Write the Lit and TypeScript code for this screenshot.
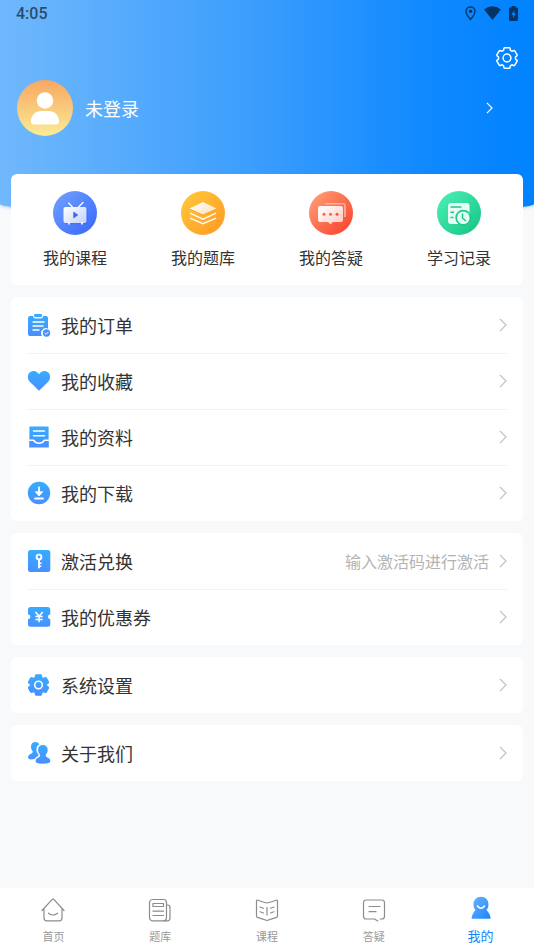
import { LitElement, html, svg, css, nothing, TemplateResult, SVGTemplateResult } from "lit";
import { customElement } from "lit/decorators.js";
import { classMap } from "lit/directives/class-map.js";

interface Row {
  label: string;
  icon: TemplateResult;
  hint?: string;
}

/** Outline of a six-toothed cog centred on (cx, cy). */
function cog(cx: number, cy: number, outer: number, inner: number): string {
  const at = (r: number, deg: number) => {
    const a = (deg * Math.PI) / 180;
    return `${(cx + r * Math.cos(a)).toFixed(2)} ${(cy + r * Math.sin(a)).toFixed(2)}`;
  };
  let d = "";
  for (let i = 0; i < 6; i++) {
    const m = -90 + i * 60;
    d += `${i ? "L" : "M"}${at(inner, m - 22)}Q${at(outer, m - 19)} ${at(outer, m - 13)}L${at(outer, m + 13)}Q${at(outer, m + 19)} ${at(inner, m + 22)}Q${at(inner * 0.94, m + 30)} ${at(inner, m + 38)}`;
  }
  return d + "Z";
}

const rowIcon = (body: SVGTemplateResult) => html`
  <svg width="24" height="24" viewBox="0 0 24 24" aria-hidden="true">
    <defs>
      <linearGradient id="g" x1="0" y1="0" x2="0" y2="24" gradientUnits="userSpaceOnUse">
        <stop offset="0" stop-color="#35aeff" />
        <stop offset="1" stop-color="#4a8dff" />
      </linearGradient>
    </defs>
    ${body}
  </svg>
`;

const disc = (id: string, from: string, to: string, body: SVGTemplateResult) => html`
  <svg width="44" height="44" viewBox="0 0 44 44" aria-hidden="true">
    <defs>
      <linearGradient id=${id} x1="0.1" y1="0.1" x2="0.9" y2="0.9">
        <stop offset="0" stop-color=${from} />
        <stop offset="1" stop-color=${to} />
      </linearGradient>
      <linearGradient id=${id + "-face"} x1="0" y1="0" x2="1" y2="0.8">
        <stop offset="0" stop-color="#fff" />
        <stop offset="1" stop-color="#fff" stop-opacity="0.7" />
      </linearGradient>
    </defs>
    <circle cx="22" cy="22" r="22" fill="url(#${id})" />
    ${body}
  </svg>
`;

const shortcuts = [
  {
    label: "我的课程",
    icon: disc("course", "#6c9dff", "#3c6cfb", svg`
      <path d="M15.500 12l4 4M30 11.500l-4.500 4.500" stroke="#fff" stroke-width="1.200" fill="none" stroke-linecap="round" />
      <rect x="12" y="17.500" width="23" height="16" rx="2" fill="#2f5de8" opacity=".3" />
      <path d="M15 31h2v2.500h-2zM28 31h2v2.500h-2z" fill="#dfeaff" />
      <rect x="10.500" y="16" width="23" height="16" rx="2" fill="url(#course-face)" />
      <path d="M20.300 20.500v7l5-3.500z" fill="#3567f2" />`),
  },
  {
    label: "我的题库",
    icon: disc("bank", "#ffc637", "#ff9d28", svg`
      <path d="M22 12l13.500 6.500L22 24.500 8.500 18.500z" fill="#e8821a" opacity=".3" />
      <path d="M22 11l13.500 6.500L22 23.500 8.500 17.500z" fill="url(#bank-face)" />
      <path d="M9 22.200l13 6 13-6M9 27.200l13 5.500 13-5.500" fill="none" stroke="#fff" stroke-width="1.300" stroke-opacity=".95" />`),
  },
  {
    label: "我的答疑",
    icon: disc("qa", "#ff9a72", "#fb4630", svg`
      <path d="M16 12.800h18.300q1.700 0 1.700 1.700V26" fill="none" stroke="#ffb39e" stroke-width="1.600" />
      <path d="M11 15h21q2 0 2 2v12q0 2-2 2H24l-2.500 2.200L19 31h-8q-2 0-2-2V17q0-2 2-2z" fill="url(#qa-face)" />
      <circle cx="15" cy="23.300" r="1.500" fill="#fb6343" /><circle cx="21.500" cy="23.300" r="1.500" fill="#fb6343" /><circle cx="28" cy="23.300" r="1.500" fill="#fb5237" />`),
  },
  {
    label: "学习记录",
    icon: disc("log", "#47eeb2", "#1bc588", svg`
      <rect x="11" y="12" width="21.500" height="21" rx="3" fill="#e6fff5" />
      <path d="M13.500 16h11M13.500 21.200h3.500M13.500 26.500h3" stroke="#23c58c" stroke-width="1.600" />
      <circle cx="26.300" cy="26.700" r="8" fill="#1fc98d" />
      <circle cx="26.300" cy="26.700" r="6.300" fill="#e0fff3" />
      <path d="M25.500 22.500v4.500l3.300 3" fill="none" stroke="#23c58c" stroke-width="1.500" />`),
  },
];

const groups: Row[][] = [
  [
    {
      label: "我的订单",
      icon: rowIcon(svg`
        <path d="M3 3h3q.5 2.500 2.500 2.500h5Q16 5.500 16.200 3H19q2 0 2 2v10.500a5 5 0 0 0-6 7.500H3q-2 0-2-2V5q0-2 2-2z" fill="url(#g)" />
        <rect x="7" y="1" width="8" height="3" rx="1.200" fill="url(#g)" />
        <path d="M6 9h11M6 13h10M6 17h6" stroke="#fff" stroke-width="1.400" stroke-linecap="round" />
        <circle cx="19.500" cy="20" r="3.700" fill="url(#g)" />
        <path d="M17.700 20l1.400 1.300 2.400-2.500" stroke="#fff" fill="none" />`),
    },
    {
      label: "我的收藏",
      icon: rowIcon(svg`<path d="M12 21.800L2.500 12.400C-.5 8.800.7 2.600 6.300 2.100c2.400-.2 4.400 1.200 5.700 3.200 1.300-2 3.300-3.400 5.700-3.200 5.600.5 6.800 6.700 3.800 10.300z" fill="url(#g)" />`),
    },
    {
      label: "我的资料",
      icon: rowIcon(svg`
        <path d="M3 1.500h18q.6 0 .6.600V14.500h-4.100q-.9 0-1.200.8Q15 17.500 12 17.500t-4.300-2.200q-.3-.8-1.200-.8H2.400V2.100q0-.6.600-.6z" fill="url(#g)" />
        <path d="M2.200 16h4Q8 19 12 19t5.800-3h4v6.400H2.200z" fill="url(#g)" />
        <path d="M6.500 6h11M6.500 10.800h11" stroke="#fff" stroke-width="1.500" stroke-linecap="round" />`),
    },
    {
      label: "我的下载",
      icon: rowIcon(svg`
        <circle cx="12" cy="12" r="11.200" fill="url(#g)" />
        <path d="M12 6.500v6" stroke="#fff" stroke-width="2" stroke-linecap="round" />
        <path d="M8.300 10.800h7.400L12 15z" fill="#fff" stroke="#fff" stroke-width=".8" stroke-linejoin="round" />
        <path d="M8 17.500h8" stroke="#fff" stroke-width="1.800" stroke-linecap="round" />`),
    },
  ],
  [
    {
      label: "激活兑换",
      hint: "输入激活码进行激活",
      icon: rowIcon(svg`
        <rect x="1" y="1" width="22.300" height="22" rx="2.500" fill="url(#g)" />
        <circle cx="12" cy="8" r="2.400" fill="none" stroke="#fff" stroke-width="1.900" />
        <path d="M12 11v7.500" stroke="#fff" stroke-width="1.900" stroke-linecap="round" />
        <path d="M12 14.300h2.500M12 17.300h2.300" stroke="#fff" stroke-width="1.500" />`),
    },
    {
      label: "我的优惠券",
      icon: rowIcon(svg`
        <path d="M3.500 2h17Q23.300 2 23.300 4.500v4.900a2.400 2.400 0 0 0 0 4.800v5.100q0 2.500-2.800 2.500h-17Q1 21.800 1 19.300v-5.100a2.400 2.400 0 0 0 0-4.800V4.500Q1 2 3.500 2z" fill="url(#g)" />
        <path d="M8.500 7l3.600 4.300L15.700 7M12.100 11.300v6M8.500 11.500h7.200M8.500 14.500h7.200" stroke="#fff" stroke-width="1.500" fill="none" />`),
    },
  ],
  [
    {
      label: "系统设置",
      icon: rowIcon(svg`
        <path d=${cog(11.5, 12, 10.5, 8.4)} fill="url(#g)" stroke="url(#g)" stroke-width="1.200" stroke-linejoin="round" />
        <circle cx="11.500" cy="12" r="3.800" fill="none" stroke="#fff" stroke-width="1.600" />`),
    },
  ],
  [
    {
      label: "关于我们",
      icon: rowIcon(svg`
        <path d="M8.500 1c-3 0-4.500 2-4.500 4.800 0 2 .6 3.400 1.700 4.500.3 1-.3 1.800-1.200 2.200C2.500 13.400 1 14.200 1 16.200q0 2 2.500 2.300l4-.4c.8-1.500 2-2.200 3.400-2.900.7-.5.8-1.200.4-1.900-2.800-3-2.500-8 1-10C11.300 1.800 10 1 8.500 1z" fill="url(#g)" />
        <path d="M15.800 4c-3 0-4.700 2-4.700 4.700 0 2.100.7 3.600 1.900 4.800.5 1.300-.1 2.200-1.200 2.700-2 .9-3.200 1.700-3.200 3.700 0 2 2.500 2.800 7.200 2.800s7.500-.8 7.500-2.800c0-2-1.100-2.800-3.300-3.700-1.100-.5-1.600-1.400-1.100-2.700 1.200-1.200 1.800-2.700 1.800-4.800C20.700 6 18.800 4 15.800 4z" fill="url(#g)" />`),
    },
  ],
];

const tabIcon = (body: SVGTemplateResult) => html`
  <svg width="24" height="24" viewBox="0 0 24 24" fill="none" stroke="#8c8c8c"
    stroke-width="1.200" stroke-linecap="round" stroke-linejoin="round" aria-hidden="true">${body}</svg>
`;

const tabs = [
  {
    label: "首页",
    icon: tabIcon(svg`<path d="M1 12.500L11 1.700q1-1 2 0L23 12.500M3 10.500V20q0 2.800 2.800 2.800h12.400Q21 22.800 21 20v-9.500M7.500 15.200q4.500 3.600 9 0" />`),
  },
  {
    label: "题库",
    icon: tabIcon(svg`<rect x="1.500" y="1.500" width="17" height="21.300" rx="3" /><path d="M18.500 7h1q2.500 0 2.500 2.500v10.800q0 2.500-2.500 2.500h-3.500M5 5.500h10.500V8.500H5zM5 13.200h10.500M5 17.500h10.500" />`),
  },
  {
    label: "课程",
    icon: tabIcon(svg`<path d="M12 5Q7 4 3 2.300q-1.500-.5-1.500 1V18q0 1 1 1.400Q7 20.700 12 22.500q5-1.800 9.500-3.100 1-.4 1-1.400V3.300q0-1.500-1.500-1Q17 4 12 5zM12 9.500v7.500M5 9l3.500 1.200M5 13.800l3.500 1.200M19 9l-3.500 1.200M19 13.800l-3.500 1.200" />`),
  },
  {
    label: "答疑",
    icon: tabIcon(svg`<path d="M12.500 21H4.300q-2.800 0-2.800-2.800V4.800Q1.500 2 4.300 2h15.400q2.800 0 2.800 2.800v13.400q0 2.800-2.800 2.800h-1.500M12.500 21l3.300 2M7 8.500h11M7 13.700h7" />`),
  },
  {
    label: "我的",
    active: true,
    icon: html`
      <svg width="24" height="24" viewBox="0 0 24 24" aria-hidden="true">
        <defs><linearGradient id="me" x1="0" y1="0" x2="1" y2="1">
          <stop offset="0" stop-color="#6ab4fd" /><stop offset="1" stop-color="#1c84fb" />
        </linearGradient></defs>
        <path d="M12 .8c-4.400 0-7.500 3.300-7.500 7.600 0 2.400.8 4.200 2.100 5.700-1.900 1.700-3.300 4.300-4 7.300q-.3 1.300 1 1.300h17q1.300 0 1-1.300c-.7-3-2.200-5.600-4.200-7.300 1.300-1.500 2.100-3.300 2.100-5.700C19.500 4.100 16.400.8 12 .8z" fill="url(#me)" />
        <path d="M8.600 10q3.400 4.500 6.800 0" fill="none" stroke="#fff" stroke-width="1.600" stroke-linecap="round" />
      </svg>`,
  },
];

const chevron = html`
  <svg class="chevron" width="8" height="14" viewBox="0 0 8 14" fill="none" stroke="currentColor" stroke-width="1.300" aria-hidden="true">
    <path d="M1 1l6 6-6 6" />
  </svg>
`;

@customElement("app-root")
export class AppRoot extends LitElement {
  static styles = css`
    :host {
      display: flex;
      flex-direction: column;
      min-height: 100vh;
      background: #f8f9fb;
      color: #333;
      font-family: "Noto Sans CJK SC", "Noto Sans", sans-serif;
    }
    * { box-sizing: border-box; }
    svg { display: block; flex: none; }
    button, a {
      margin: 0;
      padding: 0;
      border: 0;
      background: none;
      color: inherit;
      font: inherit;
      text-decoration: none;
      cursor: pointer;
    }
    .hero {
      height: 214px;
      margin-bottom: -40px;
      background: linear-gradient(90deg, #70b8fc 0%, #389cfd 50%, #128aff 78%, #0082ff 100%);
      border-radius: 0 0 50% 50% / 0 0 10px 10px;
      box-shadow: 0 1px 3px rgba(60, 150, 250, 0.4);
      color: #fff;
    }
    .status {
      display: flex;
      align-items: center;
      justify-content: space-between;
      height: 28px;
      padding: 0 16px;
      color: rgba(0, 0, 0, 0.6);
      font: 500 16px/28px Roboto, sans-serif;
    }
    .indicators { display: flex; align-items: center; gap: 8px; padding-bottom: 2px; }
    .tools { display: flex; justify-content: flex-end; padding: 18px 15px 10px; }
    .profile {
      display: flex;
      align-items: center;
      width: 100%;
      gap: 12px;
      padding: 0 41px 0 17px;
      font-size: 18px;
      line-height: 24px;
    }
    .profile .chevron { width: 7px; height: 12px; }
    .name { flex: 1; text-align: left; }
    main {
      display: flex;
      flex: 1;
      flex-direction: column;
      gap: 12px;
      padding: 0 11px 12px;
    }
    .card {
      margin: 0;
      padding: 0 16px;
      border-radius: 6px;
      background: #fff;
      list-style: none;
    }
    .shortcuts {
      display: grid;
      grid-template-columns: repeat(4, 1fr);
      padding: 17px 0 16px;
    }
    .shortcut {
      display: flex;
      flex-direction: column;
      align-items: center;
      gap: 10px;
      font-size: 16px;
      line-height: 24px;
    }
    .row {
      display: flex;
      align-items: center;
      width: 100%;
      height: 56px;
      gap: 10px;
      font-size: 18px;
      line-height: 24px;
    }
    .item + .item .row { border-top: 1px solid #f2f2f2; padding-bottom: 1px; }
    .label { flex: 1; text-align: left; }
    .hint { color: #b3b3b3; font-size: 16px; }
    .row .chevron { color: #c4c4c4; }
    .tabs {
      display: flex;
      background: #fff;
      height: 62px;
    }
    .tab {
      display: flex;
      flex: 1;
      flex-direction: column;
      align-items: center;
      gap: 6px;
      padding-top: 10px;
      color: #999;
      font-size: 11px;
      line-height: 16px;
    }
    .tab.active { padding-top: 8px; gap: 8px; color: #0f86fb; font-size: 13px; }
  `;

  render() {
    return html`
      <header class="hero">
        <div class="status">
          <span>4:05</span>
          <span class="indicators">
            <svg width="11" height="15" viewBox="0 0 11 15" aria-hidden="true">
              <path d="M5.500 1C2.900 1 1 2.900 1 5.300 1 8.500 5.500 13.500 5.500 13.500S10 8.500 10 5.300C10 2.900 8.100 1 5.500 1z" fill="none" stroke="currentColor" stroke-width="1.400" />
              <circle cx="5.500" cy="5.300" r="1.700" fill="currentColor" />
            </svg>
            <svg width="17" height="14" viewBox="0 0 17 14" aria-hidden="true">
              <path d="M0 3.500Q8.500-3 17 3.500L8.500 14z" fill="currentColor" />
            </svg>
            <svg width="9" height="15" viewBox="0 0 9 15" aria-hidden="true">
              <path d="M2.500 1.500V0h4v1.500H8q1 0 1 1V14q0 1-1 1H1q-1 0-1-1V2.500q0-1 1-1zM5.300 4L2.300 9h1.800v3.500l2.700-5H5.200z" fill="currentColor" fill-rule="evenodd" />
            </svg>
          </span>
        </div>
        <div class="tools">
          <button type="button" aria-label="设置">
            <svg width="24" height="24" viewBox="0 0 24 24" fill="none" stroke="#fff" stroke-width="1.500" stroke-linejoin="round">
              <path d=${cog(12, 12, 10.6, 8.7)} />
              <circle cx="12" cy="12" r="3.900" />
            </svg>
          </button>
        </div>
        <button class="profile" type="button">
          <svg width="56" height="56" viewBox="0 0 56 56" aria-hidden="true">
            <defs><linearGradient id="avatar" x1="0" y1="0" x2="0" y2="1">
              <stop offset="0" stop-color="#f8a762" /><stop offset="1" stop-color="#fbec95" />
            </linearGradient></defs>
            <circle cx="28" cy="28" r="28" fill="url(#avatar)" />
            <circle cx="28" cy="20.500" r="8.300" fill="#fff" />
            <path d="M14 41.500C14 35 19 31 24 31h8c5 0 10 4 10 10.500q0 3-3 3H17q-3 0-3-3z" fill="#fff" />
          </svg>
          <span class="name">未登录</span>
          ${chevron}
        </button>
      </header>
      <main>
        <nav class="card shortcuts">
          ${shortcuts.map((s) => html`<a class="shortcut" href="#">${s.icon}<span>${s.label}</span></a>`)}
        </nav>
        ${groups.map((rows) => html`
          <ul class="card">
            ${rows.map((r) => html`
              <li class="item">
                <button class="row" type="button">
                  ${r.icon}
                  <span class="label">${r.label}</span>
                  ${r.hint ? html`<span class="hint">${r.hint}</span>` : nothing}
                  ${chevron}
                </button>
              </li>`)}
          </ul>`)}
      </main>
      <nav class="tabs">
        ${tabs.map((t) => html`
          <a class=${classMap({ tab: true, active: !!t.active })} href="#">${t.icon}<span>${t.label}</span></a>`)}
      </nav>
    `;
  }
}
